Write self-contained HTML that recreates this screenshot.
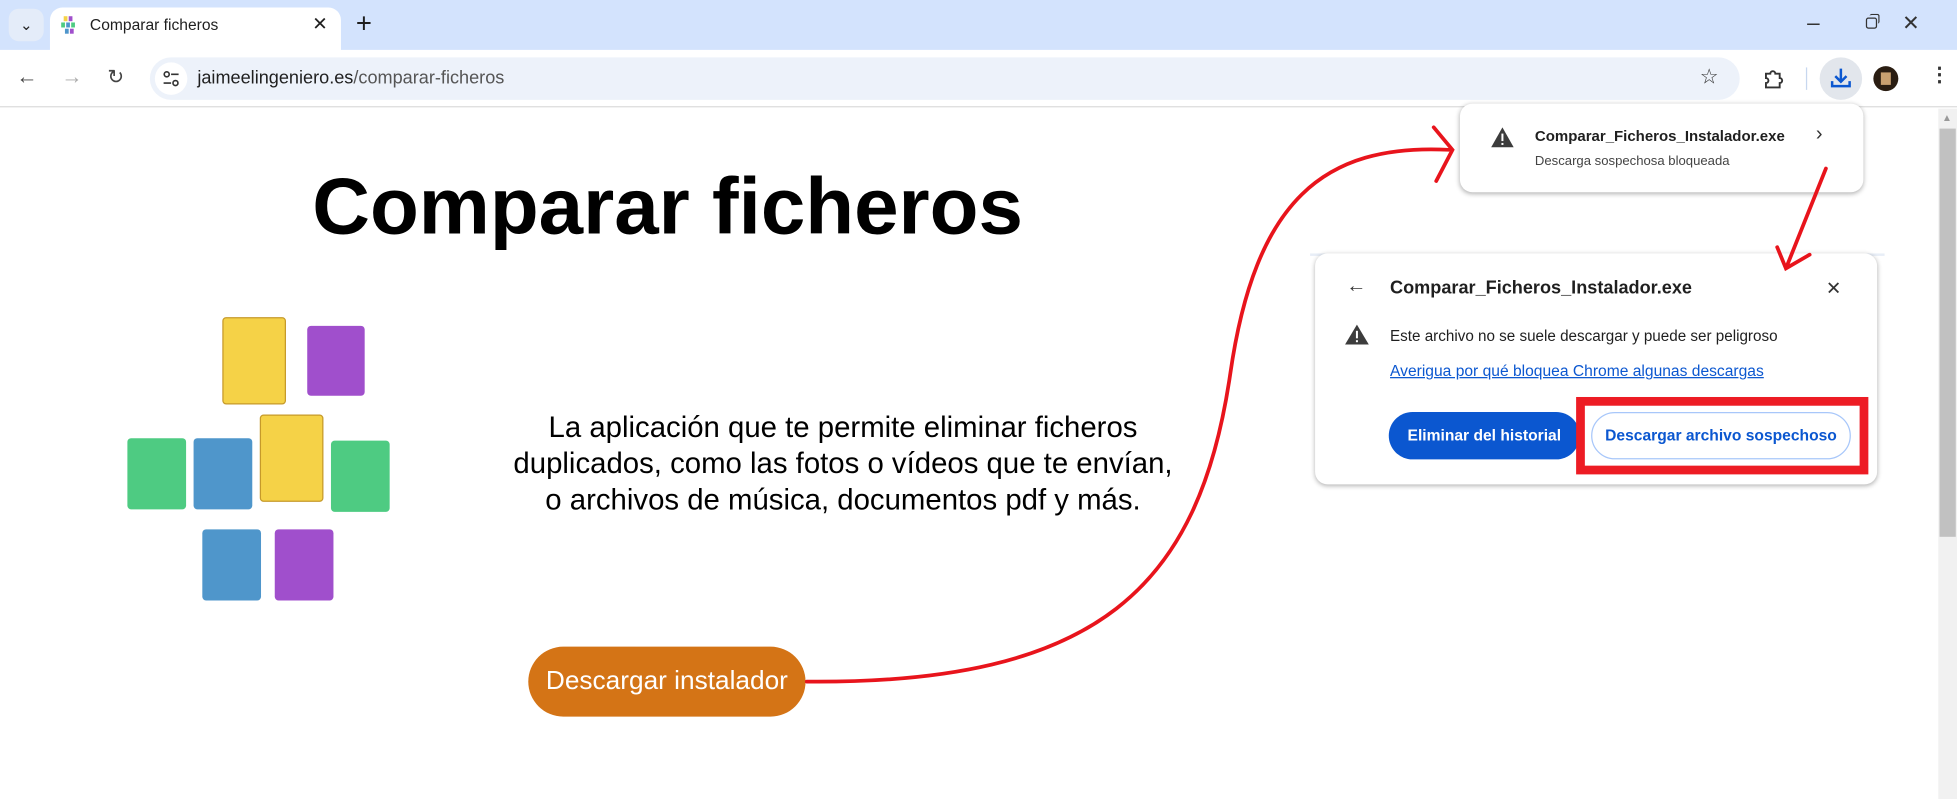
<!DOCTYPE html>
<html><head><meta charset="utf-8"><style>
*{margin:0;padding:0;box-sizing:border-box}
body{width:1957px;height:799px;overflow:hidden;background:#fff;font-family:"Liberation Sans",sans-serif}
#w{position:absolute;left:0;top:0;width:1567px;height:640px;transform:scale(1.2489,1.2484);transform-origin:0 0}
.a{position:absolute}
.sq{position:absolute;border-radius:3px}
.y{background:#f5d247;border:1.3px solid #c69a2a}
.p{background:#a04fcc}.g{background:#4ecb82}.b{background:#4f96cb}
.pop{position:absolute;background:#fff;border-radius:10px;box-shadow:0 1px 4px rgba(0,0,0,.3)}
</style></head><body><div id="w">
<div class="a" style="left:0;top:0;width:1567px;height:40px;background:#d3e3fd"></div>
<div class="a" style="left:7px;top:7px;width:28px;height:26px;border-radius:8px;background:#e4ecf9;font-size:12px;text-align:center;line-height:26px;color:#222">&#8964;</div>
<div class="a" style="left:40px;top:6px;width:233px;height:36px;background:#fff;border-radius:10px 10px 0 0"></div>
<svg class="a" style="left:48px;top:12px" width="16" height="16"><rect x="3" y="1" width="3" height="4" fill="#f5d247"/><rect x="7" y="1" width="3" height="4" fill="#a04fcc"/><rect x="1" y="6" width="3" height="4" fill="#4ecb82"/><rect x="5" y="6" width="3" height="4" fill="#4f96cb"/><rect x="9" y="6" width="3" height="4" fill="#4ecb82"/><rect x="4" y="11" width="3" height="4" fill="#4f96cb"/><rect x="8" y="11" width="3" height="4" fill="#a04fcc"/></svg>
<div class="a" style="left:72px;top:13px;font-size:12.5px;color:#1f1f1f">Comparar ficheros</div>
<div class="a" style="left:250px;top:10px;font-size:15px;color:#1f1f1f">✕</div>
<div class="a" style="left:285px;top:6px;font-size:22px;color:#1f1f1f;font-weight:300">+</div>
<div class="a" style="left:1447px;top:8px;font-size:18px;color:#333">–</div>
<div class="a" style="left:1494px;top:14px;width:9px;height:9px;border:1.2px solid #333;border-radius:2px;background:#d3e3fd"></div>
<div class="a" style="left:1497px;top:11px;width:8px;height:8px;border-top:1.2px solid #333;border-right:1.2px solid #333;border-radius:2px"></div>
<div class="a" style="left:1523px;top:9px;font-size:17px;color:#333">✕</div>
<div class="a" style="left:0;top:40px;width:1567px;height:46px;background:#fff;border-bottom:1px solid #ddd"></div>
<div class="a" style="left:13px;top:52px;font-size:17px;color:#444">←</div>
<div class="a" style="left:49px;top:52px;font-size:17px;color:#aaa">→</div>
<div class="a" style="left:86px;top:52px;font-size:16px;color:#444">↻</div>
<div class="a" style="left:120px;top:46px;width:1273px;height:34px;border-radius:17px;background:#edf2fa"></div>
<div class="a" style="left:124px;top:50px;width:26px;height:26px;border-radius:13px;background:#fff"></div>
<svg class="a" style="left:130px;top:56px" width="14" height="14"><circle cx="3.5" cy="3.5" r="2" fill="none" stroke="#333" stroke-width="1.3"/><line x1="7" y1="3.5" x2="13" y2="3.5" stroke="#333" stroke-width="1.3"/><circle cx="10.5" cy="10.5" r="2" fill="none" stroke="#333" stroke-width="1.3"/><line x1="1" y1="10.5" x2="7" y2="10.5" stroke="#333" stroke-width="1.3"/></svg>
<div class="a" style="left:158px;top:55px;font-size:14.5px;color:#1f1f1f">jaimeelingeniero.es<span style="color:#555">/comparar-ficheros</span></div>
<div class="a" style="left:1361px;top:52px;font-size:17px;color:#333">☆</div>
<svg class="a" style="left:1411px;top:54px" width="18" height="18"><path d="M3 5h3.5a2 2 0 0 1 4 0H14v3.5a2 2 0 0 1 0 4V16H3v-3.5a2 2 0 0 0 0-4Z" fill="none" stroke="#333" stroke-width="1.5"/></svg>
<div class="a" style="left:1446px;top:54px;width:1px;height:18px;background:#c7d7ef"></div>
<div class="a" style="left:1457px;top:46px;width:34px;height:34px;border-radius:17px;background:#e2e6ec"></div>
<svg class="a" style="left:1465px;top:53px" width="18" height="18"><path d="M9 2v10M4.5 8l4.5 4.5 4.5-4.5M2 12v4h14v-4" fill="none" stroke="#0b57d0" stroke-width="2"/></svg>
<div class="a" style="left:1500px;top:53px;width:20px;height:20px;border-radius:10px;background:#2a1d12"><div style="margin:5px 6px;width:8px;height:10px;background:#c9a070"></div></div>
<div class="a" style="left:1545px;top:50px;font-size:16px;color:#333;font-weight:bold">⋮</div>
<div class="a" style="left:1552px;top:87px;width:15px;height:553px;background:#f1f1f1"></div>
<div class="a" style="left:1553px;top:103px;width:13px;height:327px;background:#c1c1c1"></div>
<div class="a" style="left:1555px;top:90px;font-size:8px;color:#999">▲</div>

<div class="a" style="left:250px;top:128px;font-size:64px;font-weight:bold;color:#000">Comparar ficheros</div>
<div class="sq y" style="left:178px;top:254px;width:51px;height:70px"></div>
<div class="sq p" style="left:246px;top:261px;width:46px;height:56px"></div>
<div class="sq g" style="left:102px;top:351px;width:47px;height:57px"></div>
<div class="sq b" style="left:155px;top:351px;width:47px;height:57px"></div>
<div class="sq y" style="left:208px;top:332px;width:51px;height:70px"></div>
<div class="sq g" style="left:265px;top:353px;width:47px;height:57px"></div>
<div class="sq b" style="left:162px;top:424px;width:47px;height:57px"></div>
<div class="sq p" style="left:220px;top:424px;width:47px;height:57px"></div>
<div class="a" style="left:375px;top:328px;width:600px;text-align:center;font-size:23.5px;line-height:29px;color:#000">La aplicación que te permite eliminar ficheros<br>duplicados, como las fotos o vídeos que te envían,<br>o archivos de música, documentos pdf y más.</div>
<div class="a" style="left:423px;top:518px;width:222px;height:56px;border-radius:28px;background:#d47416;color:#fff;font-size:21px;text-align:center;line-height:56px">Descargar instalador</div>

<div class="a" style="left:1049px;top:203px;width:460px;height:2px;background:#e8eef7"></div>
<div class="pop" style="left:1169px;top:83px;width:323px;height:71px"></div>
<svg class="a" style="left:1193px;top:101px" width="20" height="18"><path d="M10 1L19 17H1Z" fill="#3c3c3c"/><rect x="9.2" y="6" width="1.6" height="6" fill="#fff"/><rect x="9.2" y="13.5" width="1.6" height="1.6" fill="#fff"/></svg>
<div class="a" style="left:1229px;top:102px;font-size:12px;font-weight:bold;color:#1f1f1f">Comparar_Ficheros_Instalador.exe</div>
<div class="a" style="left:1229px;top:123px;font-size:10.5px;color:#444">Descarga sospechosa bloqueada</div>
<div class="a" style="left:1454px;top:99px;font-size:16px;color:#333">›</div>

<div class="pop" style="left:1053px;top:203px;width:450px;height:185px"></div>
<div class="a" style="left:1078px;top:221px;font-size:16px;color:#333">←</div>
<div class="a" style="left:1113px;top:223px;font-size:14.5px;font-weight:bold;color:#1f1f1f">Comparar_Ficheros_Instalador.exe</div>
<div class="a" style="left:1462px;top:222px;font-size:15px;color:#333">✕</div>
<svg class="a" style="left:1076px;top:259px" width="21" height="18"><path d="M10.5 1L20 17H1Z" fill="#3c3c3c"/><rect x="9.7" y="6" width="1.6" height="6" fill="#fff"/><rect x="9.7" y="13.5" width="1.6" height="1.6" fill="#fff"/></svg>
<div class="a" style="left:1113px;top:262px;font-size:12.2px;color:#1f1f1f">Este archivo no se suele descargar y puede ser peligroso</div>
<div class="a" style="left:1113px;top:290px;font-size:12.5px;color:#0b57d0;text-decoration:underline">Averigua por qué bloquea Chrome algunas descargas</div>
<div class="a" style="left:1112px;top:330px;width:153px;height:38px;border-radius:19px;background:#0b57d0;color:#fff;font-size:12.5px;font-weight:bold;text-align:center;line-height:38px">Eliminar del historial</div>
<div class="a" style="left:1262px;top:318px;width:234px;height:62px;border:7px solid #ed1c24"></div>
<div class="a" style="left:1274px;top:330px;width:208px;height:38px;border-radius:19px;border:1px solid #a8c7fa;color:#0b57d0;font-size:12.5px;font-weight:bold;text-align:center;line-height:36px">Descargar archivo sospechoso</div>

<svg class="a" style="left:0;top:0" width="1567" height="640"><g fill="none" stroke="#e8141c" stroke-width="3" stroke-linecap="round">
<path d="M646 546C880 548 960 470 985 300C1005 160 1060 115 1160 120"/>
<path d="M1148 102L1163 120L1150 145"/>
<path d="M1462 135L1430 215M1423 198L1430 215L1449 204"/></g></svg>
</div></body></html>
